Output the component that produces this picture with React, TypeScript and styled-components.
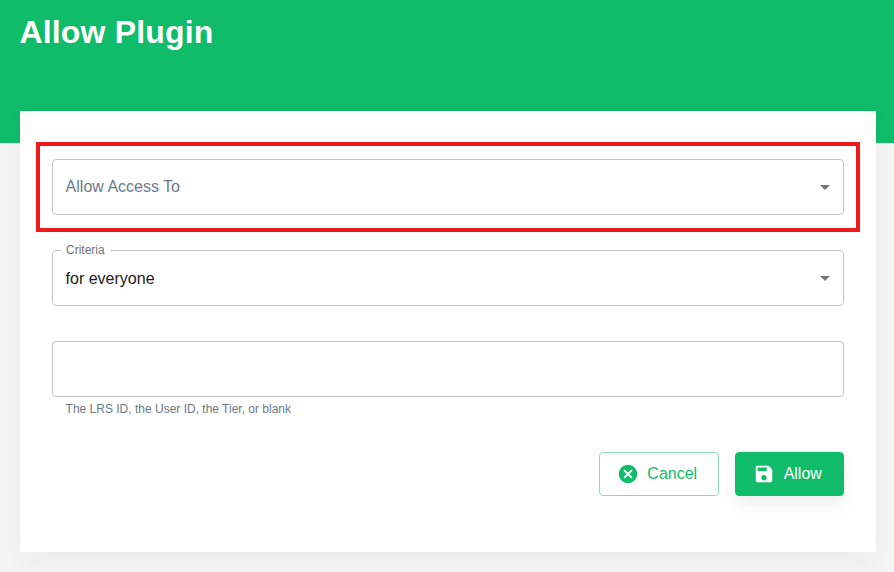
import React from "react";
import styled, { createGlobalStyle } from "styled-components";

const GREEN = "#10bc69";

const Global = createGlobalStyle`
  html, body { margin: 0; padding: 0; background: #f4f4f4; }
  body { font-family: "Liberation Sans", Arial, sans-serif; }
  * { box-sizing: border-box; }
`;

const Page = styled.div`
  width: 894px;
  height: 572px;
  overflow: hidden;
`;

const Header = styled.header`
  height: 143px;
  background: ${GREEN};
  padding: 14px 19.5px 0;
`;

const Title = styled.h1`
  margin: 0;
  color: #fff;
  font-size: 32px;
  line-height: 36px;
  font-weight: 700;
  letter-spacing: 0.16px;
`;

const Card = styled.main`
  margin: -32px 18px 0 20px;
  height: 441px;
  background: #fff;
  padding: 31px 16px 0;
  box-shadow: 0 8px 24px rgba(0, 0, 0, 0.04);
`;

const Highlight = styled.div`
  border: 4px solid #ec1c1c;
  padding: 13px 12px;
  margin-bottom: 18px;
`;

const FieldWrap = styled.div<{ $gap?: number }>`
  margin: 0 16px ${(p) => p.$gap ?? 0}px;
`;

const Field = styled.div`
  position: relative;
  display: flex;
  align-items: center;
  justify-content: space-between;
  height: 56px;
  padding: 0 7px 0 13.6px;
`;

const Outline = styled.fieldset`
  position: absolute;
  inset: -5px 0 0;
  margin: 0;
  padding: 0 8px;
  border: 1px solid #c4c4c4;
  border-radius: 4px;
  pointer-events: none;
`;

const Notch = styled.legend<{ $open?: boolean }>`
  padding: ${(p) => (p.$open ? "0 5px" : "0")};
  height: 11px;
  font-size: 12px;
  line-height: 11px;
  color: #6b747c;
  float: unset;
  width: ${(p) => (p.$open ? "auto" : "0")};
`;

const Placeholder = styled.span`
  font-size: 16px;
  color: #6b7a86;
`;

const Value = styled.span`
  font-size: 16px;
  color: #1c1c1c;
  padding-top: 2px;
`;

const Arrow = styled.svg`
  width: 24px;
  height: 24px;
  fill: #757575;
  flex: none;
`;

const Helper = styled.p`
  margin: 5px 0 0 13.6px;
  font-size: 12px;
  line-height: 14px;
  color: #6b7a7f;
`;

const Actions = styled.div`
  display: flex;
  justify-content: flex-end;
  gap: 16px;
  margin: 36px 16px 0;
`;

const Button = styled.button<{ $primary?: boolean }>`
  display: inline-flex;
  align-items: center;
  justify-content: center;
  gap: 8.5px;
  height: 44px;
  width: ${(p) => (p.$primary ? "109px" : "120px")};
  border-radius: 4px;
  font: 400 16px "Liberation Sans", Arial, sans-serif;
  border: 1px solid ${(p) => (p.$primary ? GREEN : "#8ddcb6")};
  background: ${(p) => (p.$primary ? GREEN : "#fff")};
  color: ${(p) => (p.$primary ? "#fff" : GREEN)};
  box-shadow: ${(p) => (p.$primary ? "0 8px 16px rgba(16, 60, 40, 0.08)" : "none")};
  padding: 0 4px 0 0;
`;

const ButtonIcon = styled.svg`
  width: 22px;
  height: 22px;
  fill: currentColor;
  flex: none;
`;

const Caret = () => (
  <Arrow viewBox="0 0 24 24">
    <path d="M7 10l5 5 5-5z" />
  </Arrow>
);

export default function App() {
  return (
    <Page>
      <Global />
      <Header>
        <Title>Allow Plugin</Title>
      </Header>
      <Card>
        <Highlight>
          <Field>
            <Placeholder>Allow Access To</Placeholder>
            <Caret />
            <Outline>
              <Notch />
            </Outline>
          </Field>
        </Highlight>
        <FieldWrap $gap={35}>
          <Field>
            <Value>for everyone</Value>
            <Caret />
            <Outline>
              <Notch $open>Criteria</Notch>
            </Outline>
          </Field>
        </FieldWrap>
        <FieldWrap>
          <Field>
            <Outline>
              <Notch />
            </Outline>
          </Field>
          <Helper>The LRS ID, the User ID, the Tier, or blank</Helper>
        </FieldWrap>
        <Actions>
          <Button type="button">
            <ButtonIcon viewBox="0 0 24 24">
              <path d="M12 2C6.47 2 2 6.47 2 12s4.47 10 10 10 10-4.47 10-10S17.53 2 12 2zm5 13.59L15.59 17 12 13.41 8.41 17 7 15.59 10.59 12 7 8.41 8.41 7 12 10.59 15.59 7 17 8.41 13.41 12 17 15.59z" />
            </ButtonIcon>
            Cancel
          </Button>
          <Button type="button" $primary>
            <ButtonIcon viewBox="0 0 24 24">
              <path d="M17 3H5c-1.11 0-2 .9-2 2v14c0 1.1.89 2 2 2h14c1.1 0 2-.9 2-2V7l-4-4zm-5 16c-1.66 0-3-1.34-3-3s1.34-3 3-3 3 1.34 3 3-1.34 3-3 3zm3-10H5V5h10v4z" />
            </ButtonIcon>
            Allow
          </Button>
        </Actions>
      </Card>
    </Page>
  );
}
